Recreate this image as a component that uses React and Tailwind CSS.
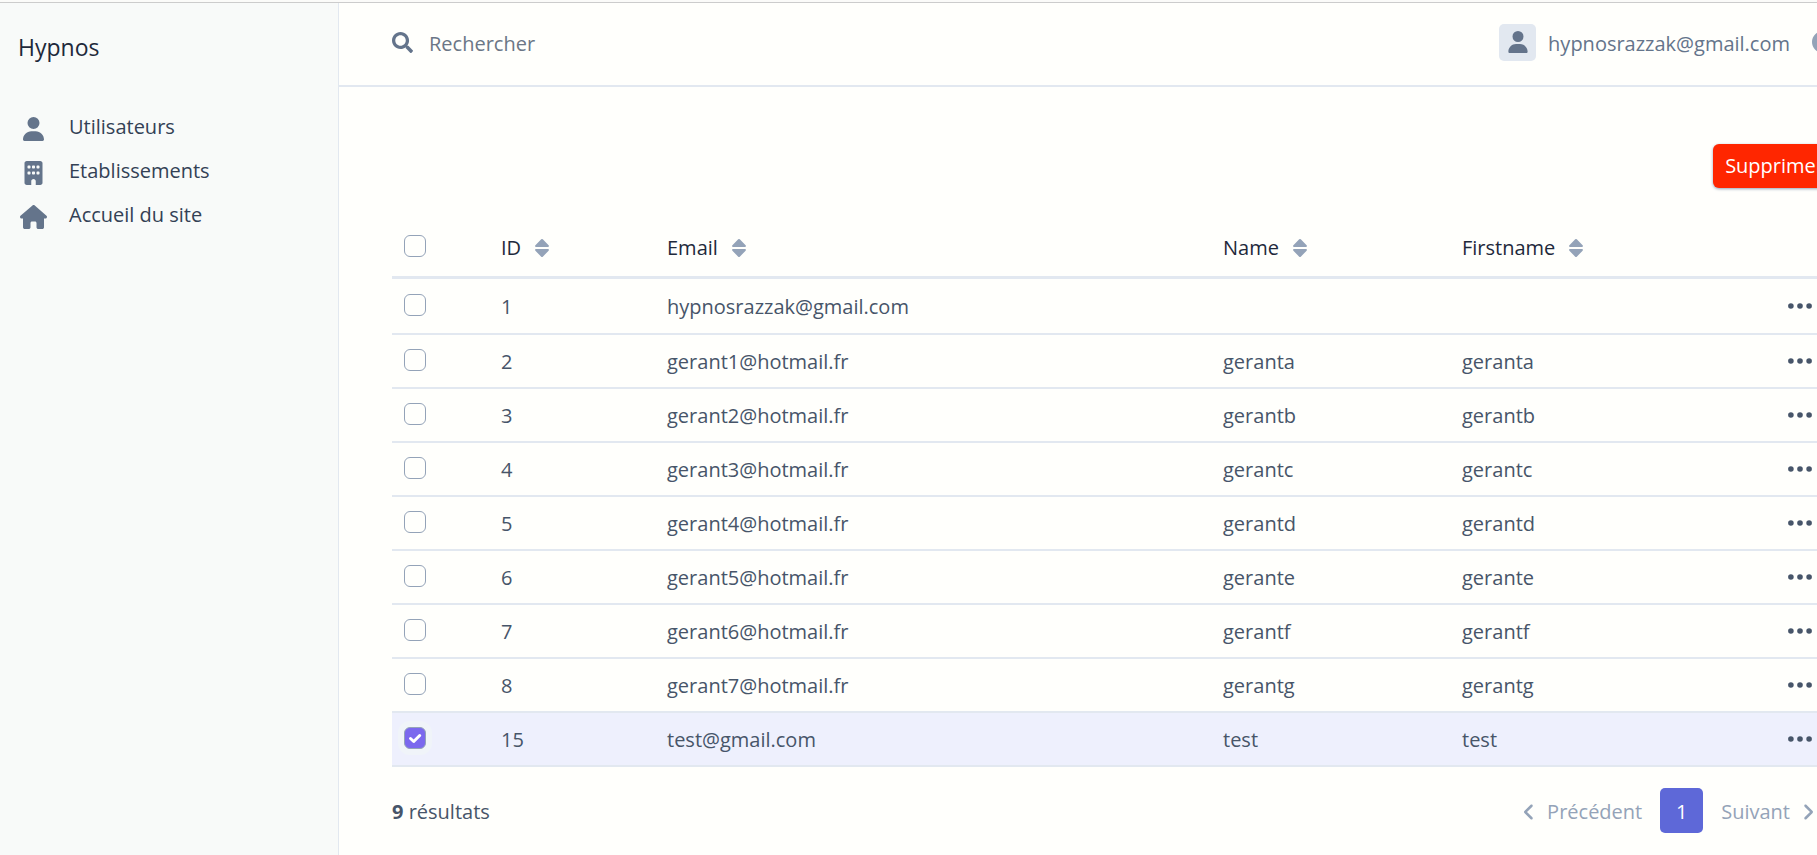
import { useState } from "react";
import { FaSearch } from "react-icons/fa";
import {
  FaUser,
  FaBuilding,
  FaHouse,
  FaCircleHalfStroke,
  FaAngleLeft,
  FaAngleRight,
} from "react-icons/fa6";

const menu = [
  { label: "Utilisateurs", Icon: FaUser },
  { label: "Etablissements", Icon: FaBuilding },
  { label: "Accueil du site", Icon: FaHouse },
];

const columns = ["ID", "Email", "Name", "Firstname"];

const users = [
  { id: 1, email: "hypnosrazzak@gmail.com", name: "", firstname: "" },
  { id: 2, email: "gerant1@hotmail.fr", name: "geranta", firstname: "geranta" },
  { id: 3, email: "gerant2@hotmail.fr", name: "gerantb", firstname: "gerantb" },
  { id: 4, email: "gerant3@hotmail.fr", name: "gerantc", firstname: "gerantc" },
  { id: 5, email: "gerant4@hotmail.fr", name: "gerantd", firstname: "gerantd" },
  { id: 6, email: "gerant5@hotmail.fr", name: "gerante", firstname: "gerante" },
  { id: 7, email: "gerant6@hotmail.fr", name: "gerantf", firstname: "gerantf" },
  { id: 8, email: "gerant7@hotmail.fr", name: "gerantg", firstname: "gerantg" },
  { id: 15, email: "test@gmail.com", name: "test", firstname: "test" },
];

function SortIcon() {
  return (
    <svg viewBox="0 0 14 20" className="h-5 w-[14px] shrink-0 fill-[#94a3b8]" aria-hidden="true">
      <path d="M6.2 1.3a1.1 1.1 0 0 1 1.6 0l5.8 6c.7.7.2 1.7-.8 1.7H1.2C.2 9-.3 8 .4 7.300z" />
      <path d="M6.200 18.700a1.100 1.100 0 0 0 1.600 0l5.800-6c.7-.7.2-1.700-.8-1.700H1.200c-1 0-1.500 1-.8 1.700z" />
    </svg>
  );
}

function DotsIcon() {
  return (
    <svg viewBox="0 0 24 24" className="size-6 fill-current" aria-hidden="true">
      <circle cx="2.900" cy="12" r="2.800" />
      <circle cx="12" cy="12" r="2.800" />
      <circle cx="21.100" cy="12" r="2.800" />
    </svg>
  );
}

function Checkbox({ checked, onChange, label }) {
  return (
    <span className="mb-[3px] grid w-[22px] grid-cols-1 grid-rows-1">
      <input
        type="checkbox"
        aria-label={label}
        checked={checked}
        onChange={onChange}
        className="col-start-1 row-start-1 size-[22px] appearance-none rounded-[6px] border border-[#94a3b8] bg-[#fffffc] checked:bg-[#7b68ee] checked:ring-6 checked:ring-[#f0f4f9]"
      />
      {checked && (
        <svg
          viewBox="0 0 22 22"
          className="pointer-events-none z-10 col-start-1 row-start-1 size-[22px] fill-none stroke-white stroke-3"
          strokeLinecap="round"
          strokeLinejoin="round"
          aria-hidden="true"
        >
          <path d="M6.500 11.500 9.700 14.500 15.700 8.500" />
        </svg>
      )}
    </span>
  );
}

export default function App() {
  const [selected, setSelected] = useState([15]);
  const toggle = (id) =>
    setSelected((ids) => (ids.includes(id) ? ids.filter((i) => i !== id) : [...ids, id]));
  const all = selected.length === users.length;

  return (
    <div className="min-h-screen overflow-hidden bg-[#fffffc] font-['Open_Sans','Noto_Sans',sans-serif] text-[20px] leading-7 text-[#475569]">
      <div className="h-[3px] border-b border-[#cccccc] bg-[#fbfbf9]" />
      <div className="flex min-h-[calc(100vh-3px)] w-[calc(100%+59px)]">
        <aside className="w-[339px] shrink-0 border-r border-[#e2e8f0] bg-[#f8faf9] px-[18px] pt-7">
          <a href="#accueil" className="block text-[23px] leading-8 text-[#1e293b]">
            Hypnos
          </a>
          <nav className="mt-[42px] flex flex-col">
            {menu.map(({ label, Icon }) => (
              <a key={label} href="#menu" className="flex h-11 items-center text-[#334155]">
                <span className="mt-1 flex w-[30px] justify-center">
                  <Icon className="h-6 w-[27px] text-[#64748b]" />
                </span>
                <span className="pl-[21px]">{label}</span>
              </a>
            ))}
          </nav>
        </aside>

        <div className="flex min-w-0 flex-1 flex-col">
          <header className="flex h-[84px] items-center border-b-2 border-[#e2e8f0] pr-[42px] pb-1 pl-[53px]">
            <label htmlFor="search" className="mr-4">
              <FaSearch className="size-[21px] text-[#64748b]" aria-label="Rechercher" />
            </label>
            <input
              id="search"
              type="search"
              placeholder="Rechercher"
              className="min-w-0 flex-1 bg-transparent pt-[3px] outline-none placeholder:text-[#6b7686]"
            />
            <button type="button" className="flex items-center gap-3 text-[#64748b]">
              <span className="flex size-[37px] items-center justify-center rounded-[5px] bg-[#e2e8f0]">
                <FaUser className="size-[22px]" />
              </span>
              <span className="pt-[3px]">hypnosrazzak@gmail.com</span>
            </button>
            <button type="button" aria-label="Apparence" className="ml-[22px]">
              <FaCircleHalfStroke className="size-[22px] text-[#94a3b8]" />
            </button>
          </header>

          <main className="pr-[52px] pl-[53px]">
            <div className="-mr-3 flex justify-end pt-[57px]">
              <button
                type="button"
                className="h-11 rounded-[6px] bg-[#ff2600] px-3 text-white shadow-[0_1px_3px_#94a3b8]"
              >
                Supprimer
              </button>
            </div>

            <table className="mt-[31px] w-full table-fixed border-separate border-spacing-0 text-left">
              <colgroup>
                <col className="w-[97px]" />
                <col className="w-[166px]" />
                <col />
                <col className="w-[239px]" />
                <col className="w-[310px]" />
                <col className="w-16" />
              </colgroup>
              <thead>
                <tr className="h-[60px] text-[#1e293b]">
                  <th className="border-b-3 border-[#e2e8f0] px-3">
                    <Checkbox
                      label="Tout sélectionner"
                      checked={all}
                      onChange={() => setSelected(all ? [] : users.map((u) => u.id))}
                    />
                  </th>
                  {columns.map((c) => (
                    <th key={c} className="border-b-3 border-[#e2e8f0] px-3 font-normal">
                      <a href="#tri" className="flex items-center gap-[14px]">
                        {c}
                        <SortIcon />
                      </a>
                    </th>
                  ))}
                  <th className="border-b-3 border-[#e2e8f0]" />
                </tr>
              </thead>
              <tbody>
                {users.map((u) => (
                  <tr
                    key={u.id}
                    className={
                      selected.includes(u.id)
                        ? "h-[54px] bg-[#eef0fd] *:border-b-2 *:border-[#e2e8f0] *:px-3"
                        : "h-[54px] first:h-14 *:border-b-2 *:border-[#e2e8f0] *:px-3"
                    }
                  >
                    <td>
                      <Checkbox
                        label={`Sélectionner ${u.email}`}
                        checked={selected.includes(u.id)}
                        onChange={() => toggle(u.id)}
                      />
                    </td>
                    <td className="pt-[2px]">{u.id}</td>
                    <td className="pt-[2px]">{u.email}</td>
                    <td className="pt-[2px]">{u.name}</td>
                    <td className="pt-[2px]">{u.firstname}</td>
                    <td>
                      <button type="button" aria-label="Actions" className="flex w-full justify-end">
                        <DotsIcon />
                      </button>
                    </td>
                  </tr>
                ))}
              </tbody>
            </table>

            <div className="-mr-[2px] flex items-center justify-between pt-[21px]">
              <p className="pt-[3px]">
                <strong>9</strong> résultats
              </p>
              <nav className="flex items-center text-[#94a3b8]" aria-label="Pagination">
                <a href="#precedent" className="flex items-center gap-2 pt-[3px] pr-[18px]">
                  <FaAngleLeft className="size-5" />
                  Précédent
                </a>
                <a
                  href="#page-1"
                  className="flex h-[45px] w-[43px] items-center justify-center rounded-[5px] bg-[#5e68d8] pt-[3px] text-white"
                >
                  1
                </a>
                <a href="#suivant" className="flex items-center gap-2 pt-[3px] pr-2 pl-[18px]">
                  Suivant
                  <FaAngleRight className="size-5" />
                </a>
              </nav>
            </div>
          </main>
        </div>
      </div>
    </div>
  );
}
